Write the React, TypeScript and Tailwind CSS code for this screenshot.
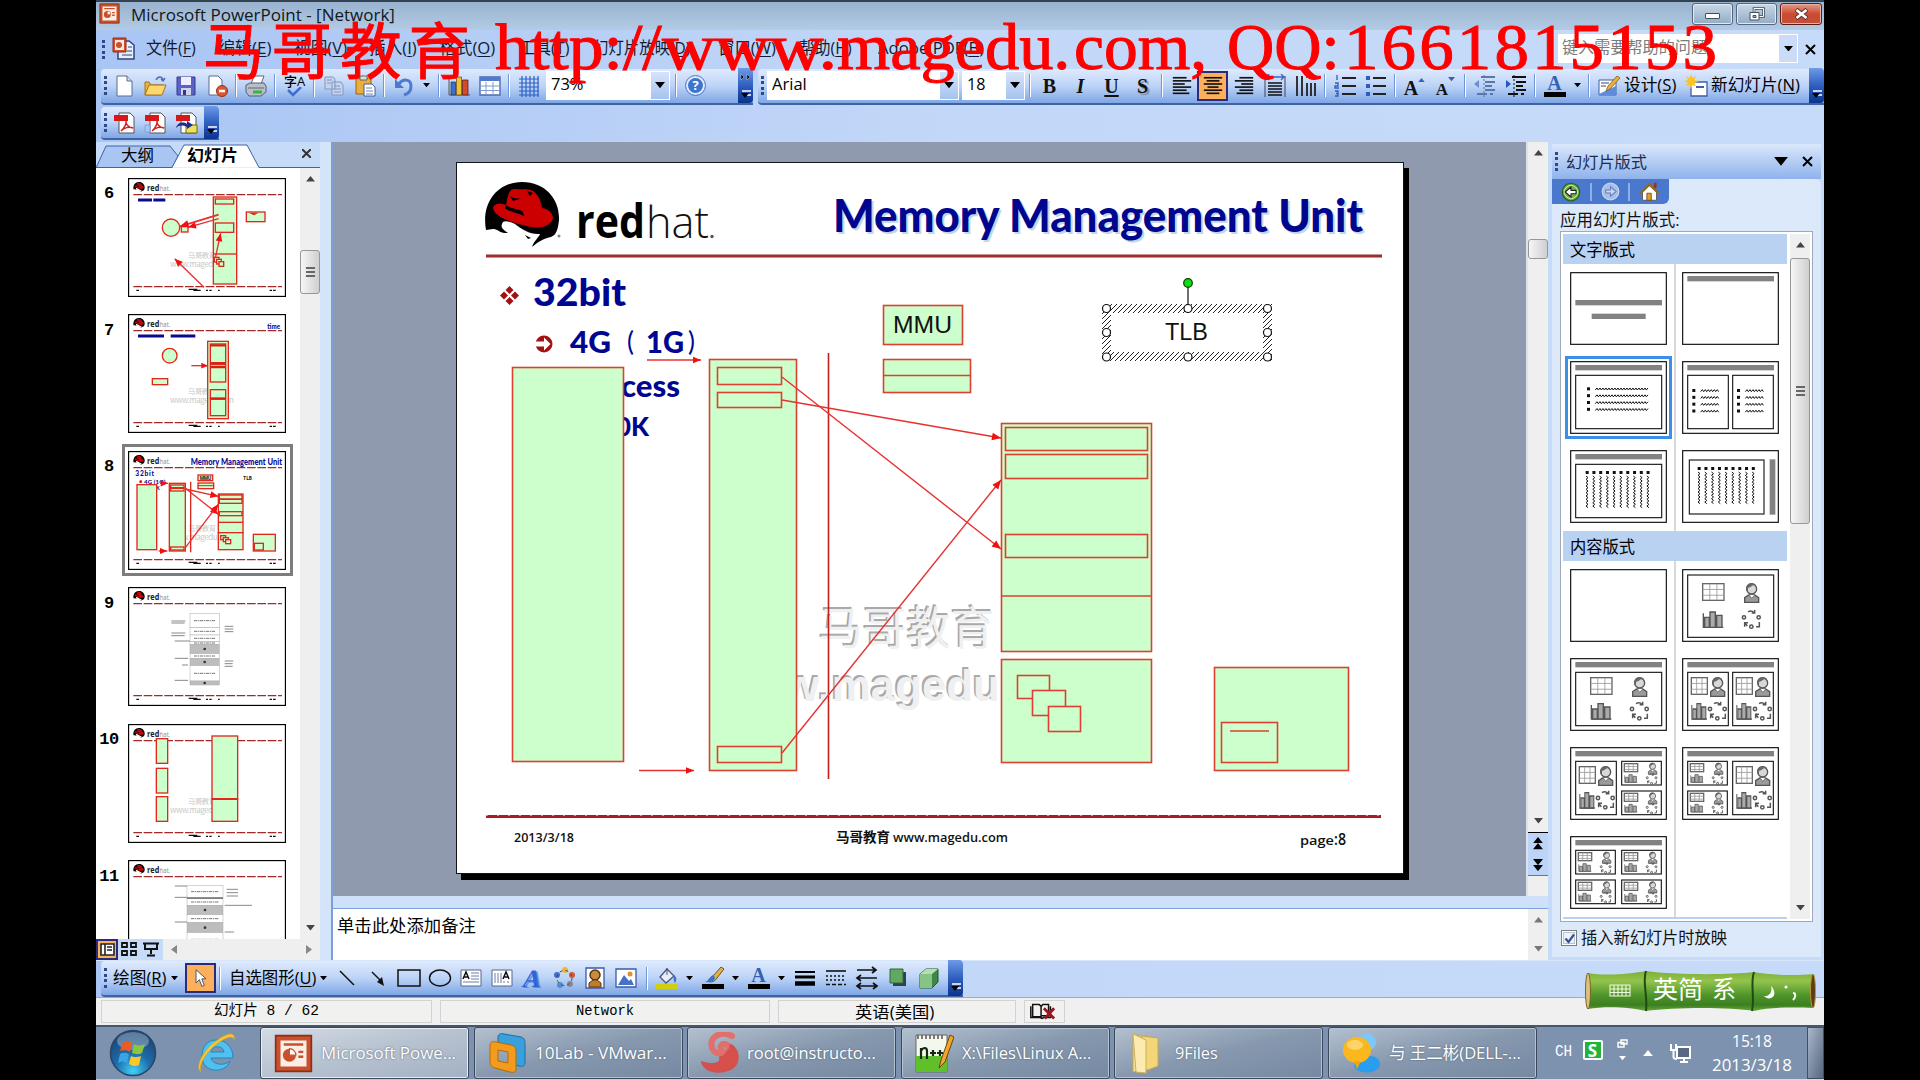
import React, { useLayoutEffect, useRef, useState } from "react";

/* Text squeezed or stretched horizontally to a given width. */
function Fit({ w, className = "", children }: { w: number; className?: string; children: React.ReactNode }) {
  const ref = useRef<HTMLSpanElement>(null);
  const [s, setS] = useState(1);
  useLayoutEffect(() => {
    if (ref.current && ref.current.offsetWidth > 0) setS(w / ref.current.offsetWidth);
  }, [w]);
  return (
    <span className={`inline-block shrink-0 whitespace-nowrap ${className}`} style={{ width: w }}>
      <span ref={ref} className="inline-block origin-left" style={{ transform: `scaleX(${s})` }}>
        {children}
      </span>
    </span>
  );
}

const U = ({ children }: { children: string }) => <span className="underline underline-offset-2">{children}</span>;

function Ic({ children, w = 24, vb = "0 0 24 24", h }: { children: React.ReactNode; w?: number; h?: number; vb?: string }) {
  return (
    <svg width={w} height={h ?? w} viewBox={vb} fill="none" className="block shrink-0">
      {children}
    </svg>
  );
}
const Cell = ({ children, on }: { children: React.ReactNode; on?: boolean }) => (
  <div className={on ? "flex h-[30px] w-[31px] shrink-0 items-center justify-center border-2 border-[#2b2b7c] bg-[#fdb05c]" : "flex h-[30px] w-[31px] shrink-0 items-center justify-center"}>
    {children}
  </div>
);
const Sep = () => (
  <div className="flex w-2 shrink-0 justify-center">
    <div className="h-[23px] w-[2px] border-r border-white bg-[#7197d8]" />
  </div>
);
const Tri = ({ up, c = "#000", w = 8 }: { up?: boolean; c?: string; w?: number }) => (
  <Ic w={w} h={w * 0.62} vb="0 0 8 5">
    <path d={up ? "M0 5L4 0L8 5Z" : "M0 0L4 5L8 0Z"} fill={c} />
  </Ic>
);
const Dd = () => (
  <div className="flex w-[15px] shrink-0 justify-center">
    <Tri w={7} />
  </div>
);
const Handle = () => (
  <div className="flex h-5 w-[9px] shrink-0 flex-col items-center justify-between">
    {[0, 1, 2, 3].map((i) => (
      <div key={i} className="h-[3px] w-[3px] bg-[#2a4a8c]" />
    ))}
  </div>
);
const Cap = ({ chevrons }: { chevrons?: boolean }) => (
  <div className="flex h-full w-[15px] shrink-0 flex-col items-center justify-end rounded-r-[4px] bg-linear-to-b from-[#6f9ae6] via-[#2f5fc0] to-[#0a348e] pb-1">
    {chevrons && (
      <Ic w={12} h={16} vb="0 0 12 16">
        <path d="M1 0L4 3L1 6ZM7 0L10 3L7 6Z" fill="#000" stroke="#fff" strokeWidth=".4" />
      </Ic>
    )}
    <Ic w={10} h={9} vb="0 0 10 9">
      <path d="M1 1H10M3 5L10 5" stroke="#fff" strokeWidth="1.5" />
      <path d="M0 3H8L4 8Z" fill="#000" />
    </Ic>
  </div>
);
const Lines = ({ rows }: { rows: [number, number][] }) => (
  <Ic w={22}>
    {rows.map(([a, b], i) => (
      <path key={i} d={`M${a} ${3 + i * 3.4}H${b}`} stroke="#111" strokeWidth="1.8" />
    ))}
  </Ic>
);

const NewDoc = () => (<Ic><path d="M5 2H15L20 7V22H5Z" fill="#fff" stroke="#5a6c8c" /><path d="M15 2V7H20" fill="#cdd9ee" stroke="#5a6c8c" /></Ic>);
const OpenI = () => (<Ic><path d="M2 8V21H18L20 11H8L6 8Z" fill="#e8b33c" stroke="#a77516" /><path d="M2 21L6 11H23L19 21Z" fill="#fbd772" stroke="#a77516" /><path d="M13 6C15 2 19 2 20 6M18 5L20 7L22 4" stroke="#4b6ea8" strokeWidth="1.4" /></Ic>);
const SaveI = () => (<Ic><path d="M3 3H21V21H3Z" fill="#5b62c4" stroke="#343a8e" /><path d="M7 3H17V11H7Z" fill="#eef" /><path d="M7 14H17V21H7Z" fill="#cfd3ea" /><path d="M9 16H12V21H9Z" fill="#33388c" /></Ic>);
const PermI = () => (<Ic><path d="M4 2H13L17 6V21H4Z" fill="#fff" stroke="#5a6c8c" /><circle cx="17" cy="17" r="5.500" fill="#dc5a32" stroke="#a02c10" /><path d="M14 17H20" stroke="#fff" strokeWidth="2.5" /></Ic>);
const PrintI = () => (<Ic><path d="M7 10L10 2H20L17 10Z" fill="#fff" stroke="#667" /><path d="M2 11L6 9H20L22 12V18L17 22H5L2 18Z" fill="#b9bfca" stroke="#555f70" /><path d="M4 14H20" stroke="#666" /><path d="M9 18H18" stroke="#35b83a" strokeWidth="3" /></Ic>);
const CopyI = () => (<Ic><path d="M3 3H11L13 5V15H3Z M10 8H19L21 11V21H10Z" fill="#c5d5ee" stroke="#8398c0" /><path d="M12 12H18M12 15H19M12 18H19M5 6H10M5 9H9" stroke="#8398c0" /></Ic>);
const PasteI = () => (<Ic><path d="M3 4H18V20H3Z" fill="#e9ae3c" stroke="#96650f" /><path d="M7 2H14V6H7Z" fill="#ddd" stroke="#666" /><path d="M11 10H19L22 13V22H11Z" fill="#fff" stroke="#4a5f92" /><path d="M13 14H19M13 17H20M13 20H20" stroke="#6c83b7" /></Ic>);
const UndoI = () => (<Ic><path d="M7 10C11 4 19 5 19 12C19 17 16 20 12 21" stroke="#4d79cf" strokeWidth="3" /><path d="M3 5V14H12Z" fill="#4d79cf" /></Ic>);
const ChartI = () => (<Ic><path d="M2 3V21H23" stroke="#555" /><path d="M4 8H8.500V21H4Z" fill="#3f6fc8" stroke="#234" strokeWidth=".7" /><path d="M9.500 3H14.500V21H9.500Z" fill="#f2c22c" stroke="#641" strokeWidth=".7" /><path d="M15.500 6H21V21H15.500Z" fill="#d94a26" stroke="#511" strokeWidth=".7" /></Ic>);
const TableI = () => (<Ic><path d="M2 3H22V21H2Z" fill="#fff" stroke="#4b6bb0" strokeWidth="1.4" /><path d="M2 3H22V7H2Z" fill="#4f7ad0" /><path d="M2 12H22M2 16.500H22M8 8V21M15 8V21" stroke="#7e9bd4" /></Ic>);
const GridI = () => (<Ic><path d="M2 5H22M2 9H22M2 13H22M2 17H22M2 21H22M5 2V23M9 2V23M13 2V23M17 2V23M21 2V23" stroke="#2f62c4" strokeWidth="1.2" /></Ic>);
const HelpI = () => (
  <div className="flex h-[19px] w-[19px] items-center justify-center rounded-full border-2 border-[#dfeafc] bg-[#3d74d0] font-['Open_Sans'] text-[13px] leading-none font-bold text-white outline outline-[#4d78c0]">?</div>
);
const DesignI = () => (<Ic><path d="M2 6H19V21H2Z" fill="#fff" stroke="#3e5fa5" /><path d="M2 20L19 12V21H2Z" fill="#5c8be0" /><path d="M9 17L11 12L20 2L23 4L13 15Z" fill="#e9b13a" stroke="#734f12" strokeWidth=".7" /><path d="M4 9H12M4 12H9" stroke="#446" /></Ic>);
const NewSlideI = () => (<Ic><path d="M7 8H23V22H7Z" fill="#fff" stroke="#3e5fa5" strokeWidth="1.3" /><path d="M12 13H20" stroke="#3e5fa5" strokeWidth="2" /><path d="M7 0L8.500 4L12 2L10.500 6L15 7L10.500 9L12 12L8.500 11L7 15L5.500 11L1 12L4 9L0 7L4 6L2 2L5.500 4Z" fill="#f8c42e" /></Ic>);
const PdfI = ({ v = 0 }: { v?: number }) => (
  <Ic>
    <path d="M6 2H17L21 6V22H6Z" fill="#fff" stroke="#555" />
    <path d="M1 4H15V10H1Z" fill="#d81818" />
    {v < 2 && <path d="M8 20C12 17 14 11 13 9C12 13 16 17 20 17C16 15 11 17 8 20Z" stroke="#d42020" strokeWidth="1.5" />}
    {v === 1 && <path d="M1 14H6V21H1Z" fill="#a8c6f4" stroke="#7fa6e0" />}
    {v === 2 && (<><path d="M11 14H22V22H11Z" fill="#ece060" stroke="#776a10" /><path d="M1 17C2 12 8 10 12 13V10L18 14L12 18V16C8 14 4 14 1 17Z" fill="#1c2c90" /></>)}
  </Ic>
);
const PptI = ({ s = 22 }: { s?: number }) => (
  <Ic w={s}>
    <path d="M1 1H23V23H1Z" fill="#c8502c" stroke="#8e2c14" />
    <path d="M4 4H20V20H4Z" fill="#fbeee6" />
    <circle cx="9.500" cy="13" r="4" fill="#c8502c" />
    <path d="M9.500 13V9A4 4 0 0 1 13.500 13Z" fill="#fff" stroke="#c8502c" strokeWidth=".7" />
    <path d="M6 6.500H18M15 11H18M15 14H18" stroke="#c8502c" strokeWidth="1.5" />
  </Ic>
);
const Letter = ({ children, cls = "" }: { children: string; cls?: string }) => (
  <span className={`font-['Liberation_Serif'] text-[20px] leading-none font-bold text-[#111] ${cls}`}>{children}</span>
);
const ColorA = () => (
  <div className="flex flex-col items-center">
    <span className="font-['Liberation_Serif'] text-[20px] leading-[17px] font-bold text-[#345fb4]">A</span>
    <div className="h-[5px] w-[22px] bg-black" />
  </div>
);

function TitleBar() {
  return (
    <div className="flex h-[30px] shrink-0 items-start border-t-2 border-[#33424f] bg-linear-to-b from-[#98b2cf] to-[#b3cbe5] pl-[3px]">
      <div className="mt-px"><PptI s={21} /></div>
      <Fit w={264} className="ml-[11px] font-['Open_Sans'] text-[17px] leading-[25px] text-[#101820]">Microsoft PowerPoint - [Network]</Fit>
      <div className="mt-px mr-[2px] ml-auto flex gap-[3px]">
        <div className="flex h-[22px] w-[41px] items-center justify-center rounded-[3px] border border-[#55677c] bg-linear-to-b from-[#c8d8e8] to-[#93acc6] shadow-[inset_0_0_0_1px_#dfe9f3]"><div className="mt-1 h-[6px] w-[15px] rounded-[1px] border border-[#444f5c] bg-white" /></div>
        <div className="flex h-[22px] w-[41px] items-center justify-center rounded-[3px] border border-[#55677c] bg-linear-to-b from-[#c8d8e8] to-[#93acc6] shadow-[inset_0_0_0_1px_#dfe9f3]">
          <Ic w={17} h={15} vb="0 0 17 15"><path d="M6 1.500H15.500V9.500H6Z" stroke="#444f5c" strokeWidth="2.600" /><path d="M6 1.500H15.500V9.500H6Z" stroke="#fff" /><path d="M2 5.500H11V13H2Z" fill="#fff" stroke="#444f5c" /><path d="M5 8.500H8V10.500H5Z" fill="#9bb" stroke="#444f5c" /></Ic>
        </div>
        <div className="flex h-[22px] w-[42px] items-center justify-center rounded-[3px] border border-[#5c1c14] bg-linear-to-b from-[#e09a88] via-[#cc4a30] to-[#c2513a] shadow-[inset_0_0_0_1px_#eab2a4]">
          <Ic w={15} h={12} vb="0 0 15 12"><path d="M2 1.500L13 10.500M13 1.500L2 10.500" stroke="#59312c" strokeWidth="4.500" /><path d="M2.500 2L12.500 10M12.500 2L2.500 10" stroke="#fff" strokeWidth="2.800" /></Ic>
        </div>
      </div>
    </div>
  );
}

const menus: [string, string, number, number][] = [
  ["文件", "F", 50, 22], ["编辑", "E", 53, 23], ["视图", "V", 53, 22], ["插入", "I", 48, 22], ["格式", "O", 56, 24],
  ["工具", "T", 50, 24], ["幻灯片放映", "D", 97, 28], ["窗口", "W", 58, 23], ["帮助", "H", 53, 26], ["Adobe PDF", "B", 106, 0],
];

function MenuBar() {
  return (
    <div className="flex h-10 shrink-0 items-center pb-px pl-[3px]">
      <Handle />
      <div className="mb-[2px] ml-[4px] w-[24px]">
        <Ic><path d="M6 4H17L22 8V22H6Z" fill="#e8eefa" stroke="#2d4580" strokeWidth="1.500" /><path d="M16 10H20M15 14H20M10 18H20" stroke="#2d4580" /><path d="M1 1H14V15H1Z" fill="#d2512c" stroke="#8e2c14" /><path d="M3 3H12V13H3Z" fill="#fbe9e0" /><circle cx="7" cy="8" r="3" fill="#c8502c" /></Ic>
      </div>
      <div className="mb-[3px] ml-[10px] flex text-[17px] leading-[22px] text-[#111c33]">
        {menus.map(([t, k, w, gap]) => (
          <div key={k} className="flex">
            <Fit w={w}>{t}(<U>{k}</U>)</Fit>
            <div style={{ width: gap }} />
          </div>
        ))}
      </div>
      <div className="mr-[7px] mb-[2px] ml-auto flex h-[29px] w-[240px] items-center justify-between bg-white p-px pl-1">
        <Fit w={145} className="mb-1 text-[16px] leading-[20px] text-[#7c7c7c]">键入需要帮助的问题</Fit>
        <div className="flex h-full w-[18px] items-center justify-center bg-[#cbdcf8]"><Tri w={9} /></div>
      </div>
      <div className="mr-[8px]"><Ic w={11} vb="0 0 11 11"><path d="M1 1L10 10M10 1L1 10" stroke="#000" strokeWidth="2" /></Ic></div>
    </div>
  );
}

const tb = "flex items-center rounded-l-[4px] bg-linear-to-b from-[#dfeafc] via-[#bcd3f7] to-[#7fa6e6] border-b-2 border-[#40639f]";
const Combo = ({ children, cls }: { children: React.ReactNode; cls: string }) => (
  <div className={`flex h-[29px] shrink-0 items-center justify-between bg-white p-px pl-[5px] ${cls}`}>
    {children}
    <div className="flex h-full w-[18px] items-center justify-center bg-linear-to-b from-[#d6e4fb] to-[#a5c3f0]"><Tri w={10} /></div>
  </div>
);

function Toolbars() {
  return (
    <>
      <div className="-mt-px flex h-[36px] shrink-0 gap-[5px] pl-[5px]">
        <div className={`${tb} w-[652px] pb-px`}>
          <div className="w-[7px]"><Handle /></div>
          <Cell><NewDoc /></Cell><Cell><OpenI /></Cell><Cell><SaveI /></Cell><Cell><PermI /></Cell><Sep />
          <Cell><PrintI /></Cell><Sep />
          <Cell>
            <div className="flex flex-col items-center">
              <span className="text-[13px] leading-[12px] font-medium">字A</span>
              <Ic w={18} h={10} vb="0 0 18 10"><path d="M3 3L8 8L16 0" stroke="#3d6fd0" strokeWidth="2.500" /></Ic>
            </div>
          </Cell>
          <Sep /><Cell><CopyI /></Cell><Cell><PasteI /></Cell><Sep /><Cell><UndoI /></Cell><Dd /><div className="w-px" /><Sep />
          <Cell><ChartI /></Cell><Cell><TableI /></Cell><Sep /><Cell><GridI /></Cell>
          <Combo cls="w-[124px] ml-[2px] mr-[2px]"><Fit w={33} className="pb-1 font-['Open_Sans'] text-[17px]">73%</Fit></Combo>
          <Sep /><Cell><HelpI /></Cell>
          <div className="ml-auto h-[35px]"><Cap chevrons /></div>
        </div>
        <div className={`${tb} flex-1 pb-px`}>
          <Handle />
          <Combo cls="w-[192px]"><Fit w={35} className="pb-1 font-['Open_Sans'] text-[17px]">Arial</Fit></Combo>
          <Combo cls="ml-[3px] mr-px w-[63px]"><Fit w={18} className="pb-1 font-['Open_Sans'] text-[17px]">18</Fit></Combo>
          <Sep />
          <Cell><Letter>B</Letter></Cell><Cell><Letter cls="italic">I</Letter></Cell><Cell><Letter cls="underline underline-offset-2">U</Letter></Cell>
          <Cell><Letter cls="[text-shadow:2px_2px_1px_#7d8ba5]">S</Letter></Cell><Sep />
          <Cell><Lines rows={[[2, 17], [2, 22], [2, 15], [2, 22], [2, 17], [2, 20]]} /></Cell>
          <Cell on><Lines rows={[[2, 22], [5, 19], [2, 22], [6, 18], [2, 22], [5, 19]]} /></Cell>
          <Cell><Lines rows={[[7, 22], [2, 22], [9, 22], [2, 22], [7, 22], [4, 22]]} /></Cell>
          <Cell><Ic><path d="M3 3H21M6 0L3 3L6 6M18 0L21 3L18 6" stroke="#3a68c4" strokeWidth="1.400" /><path d="M2 2V23M22 2V23" stroke="#445" /><path d="M5 9H19M5 12H19M5 15H19M5 18H19M5 21H19" stroke="#111" strokeWidth="1.700" /></Ic></Cell>
          <Cell><Ic><path d="M3 2V22M8 2V22M13 9V22M17 9V22M21 9V22" stroke="#222" strokeWidth="1.800" /><path d="M12 3H22" stroke="#3a68c4" strokeWidth="2" /></Ic></Cell>
          <Sep />
          <Cell><Ic><path d="M9 4H23M9 12H23M9 20H23" stroke="#222" strokeWidth="1.800" /><path d="M4 1V6M2 9H5V12H2V14H6M2 17H5V22H2M3 19.500H5" stroke="#2f5dbb" strokeWidth="1.300" /></Ic></Cell>
          <Cell><Ic><path d="M9 4H22M9 12H22M9 20H22" stroke="#222" strokeWidth="1.800" /><path d="M2 2H6V6H2ZM2 10H6V14H2ZM2 18H6V22H2Z" fill="#2f5dbb" /></Ic></Cell>
          <Sep />
          <Cell><div className="flex items-start pt-1"><Letter>A</Letter><Tri up c="#3a62ae" w={7} /></div></Cell>
          <Cell><div className="flex items-start pt-1"><Letter cls="!text-[17px] pt-1">A</Letter><Tri c="#3a62ae" w={7} /></div></Cell>
          <Sep />
          <Cell><Ic><path d="M8 3H22M12 8H22M12 12H19M12 16H22M4 20H14M17 20H20" stroke="#5a77ad" strokeWidth="2" /><path d="M1 10L6 6V14Z" fill="#6d8fd0" /><path d="M11 1V23" stroke="#5a77ad" strokeDasharray="2 2" /></Ic></Cell>
          <Cell><Ic><path d="M8 3H22M12 8H22M12 12H19M12 16H22M4 20H14M17 20H20" stroke="#111" strokeWidth="2" /><path d="M7 10L2 6V14Z" fill="#2459c4" /><path d="M10 1V23" stroke="#111" strokeDasharray="2 2" /></Ic></Cell>
          <Sep /><Cell><ColorA /></Cell><Dd /><Sep />
          <Cell><DesignI /></Cell><Fit w={52} className="pb-px text-[17px]">设计(<U>S</U>)</Fit>
          <div className="ml-[4px]"><Cell><NewSlideI /></Cell></div><Fit w={89} className="pb-px text-[17px]">新幻灯片(<U>N</U>)</Fit>
          <div className="ml-auto h-[35px]"><Cap /></div>
        </div>
      </div>
      <div className="flex h-[37px] shrink-0 pt-[2px] pb-[2px] pl-[5px]">
        <div className={`${tb} w-[118px]`}>
          <div className="w-[8px]"><Handle /></div>
          <Cell><PdfI /></Cell><Cell><PdfI v={1} /></Cell><Cell><PdfI v={2} /></Cell>
          <div className="ml-auto h-[33px]"><Cap /></div>
        </div>
      </div>
    </>
  );
}

/* ---- thumbnails ---- */
const G = "#ccffcc";
const R = "#e0281c";
function Hat({ x, y, k }: { x: number; y: number; k: number }) {
  return (
    <g transform={`translate(${x} ${y}) scale(${k})`}>
      <path d="M1 48C-4 20 13 0 37 0C61 0 75 18 74 38C73 48 71 53 66 55C60 56 54 59 47 65C49 59 54 55 55 52C46 53 36 47 30 42C26 40 18 37 17 42C15 46 20 49 23 51C15 52 12 46 8 47Z" fill="#000" />
      <path d="M8 26C10 20 16 21 21 23C23 14 24 6 30 7C37 8 42 6 48 9C55 14 56 21 57 26C64 27 68 32 68 36C65 46 53 47 42 44C29 41 10 36 8 26Z" fill="#cc0000" />
      <path d="M21 23C25 27 34 26 38 30L39 34C33 31 24 30 20 26ZM25 14C29 17 32 17 37 16L28 19ZM42 9L48 11L45 14Z" fill="#000" />
      <path d="M40 53L46 56L43 57Z" fill="#000" />
    </g>
  );
}
const serifBox = (x: number, y: number, w: number, h: number, key?: number) => (
  <rect key={key} x={x} y={y} width={w} height={h} fill={G} stroke={R} strokeWidth="4" />
);
function Head({ x2, y, size, a }: { x2: number; y: number; size: number; a: number }) {
  return <path d={`M0 0L${-size} ${-size * 0.42}V${size * 0.42}Z`} transform={`translate(${x2} ${y}) rotate(${a})`} fill="#f01010" />;
}
function Arrow({ x1, y1, x2, y2, s, w = 1, c = "#e83030" }: { x1: number; y1: number; x2: number; y2: number; s: number; w?: number; c?: string }) {
  const a = (Math.atan2(y2 - y1, x2 - x1) * 180) / Math.PI;
  return (
    <g>
      <path d={`M${x1} ${y1}L${x2} ${y2}`} stroke={c} strokeWidth={w} />
      <Head x2={x2} y={y2} size={s} a={a} />
    </g>
  );
}
function ThumbBase({ mark, children }: { mark?: boolean; children: React.ReactNode }) {
  return (
    <svg width="158" height="119" viewBox="0 0 474 357" className="block" fill="none">
      <rect x="1.500" y="1.500" width="471" height="354" fill="#fff" stroke="#000" strokeWidth="4" />
      <Hat x={16} y={12} k={0.46} />
      <text x="57" y="40" fontFamily="Open Sans" fontSize="24" fontWeight="700" fill="#222" textLength="37" lengthAdjust="spacingAndGlyphs">red</text>
      <text x="95" y="40" fontFamily="Open Sans" fontSize="24" fontWeight="400" fill="#888" textLength="32" lengthAdjust="spacingAndGlyphs">hat.</text>
      <path d="M16 50H462M16 326H462" stroke="#a42a2a" strokeWidth="4" strokeDasharray="26 5" />
      <path d="M25 337h8M182 334h26M196 337h22M234 337h6M244 337h7M270 337h5M425 337h7M435 337h8" stroke="#111" strokeWidth="4" />
      {mark && (
        <g fill="#c9c9c9" fontFamily="Noto Sans CJK SC">
          <text x="180" y="240" fontSize="22" textLength="84">马哥教育</text>
          <text x="126" y="268" fontSize="24" textLength="192">www.magedu.com</text>
        </g>
      )}
      {children}
    </svg>
  );
}
const Memory = ({ rows, x, w }: { rows: [number, number, boolean][]; x: number; w: number }) => (
  <>
    {rows.map(([y, h, dark], i) => (
      <g key={i}>
        <rect x={x} y={y} width={w} height={h} fill={dark ? "#bdbdbd" : "#fff"} stroke="#aaa" strokeWidth="1.500" />
        {dark ? <circle cx={x + w / 2} cy={y + h / 2} r="4" fill="#333" /> : <path d={`M${x + 12} ${y + h / 2}H${x + w - 12}`} stroke="#777" strokeWidth="3" strokeDasharray="9 2 5 2" />}
      </g>
    ))}
  </>
);
const thumbs: { n: number; el: React.ReactNode }[] = [
  { n: 6, el: (
    <ThumbBase mark>
      <path d="M30 66H72M76 66H112" stroke="#0a0a90" strokeWidth="9" />
      <circle cx="129" cy="149" r="26" fill={G} stroke={R} strokeWidth="4" />
      {serifBox(256, 57, 70, 261)}{serifBox(262, 63, 55, 15)}{serifBox(262, 135, 55, 28)}
      <path d="M256 228H326" stroke={R} strokeWidth="4" />
      {serifBox(355, 102, 56, 29)}<path d="M362 104H392L378 112Z" fill={R} />
      {serifBox(160, 146, 20, 16)}{serifBox(259, 238, 14, 14)}{serifBox(266, 244, 14, 14)}{serifBox(273, 251, 14, 14)}
      <Arrow x1={272} y1={110} x2={156} y2={145} s={26} w={5} /><Arrow x1={272} y1={122} x2={180} y2={148} s={24} w={4} />
      <Arrow x1={262} y1={240} x2={278} y2={166} s={24} w={4} /><Arrow x1={228} y1={328} x2={140} y2={242} s={24} w={4} />
    </ThumbBase>) },
  { n: 7, el: (
    <ThumbBase mark>
      <text x="418" y="44" fontFamily="Lato" fontWeight="900" fontSize="24" fill="#0a0a90" textLength="38" lengthAdjust="spacingAndGlyphs">time</text>
      <path d="M30 66H108M128 66H202" stroke="#0a0a90" strokeWidth="9" />
      <circle cx="125" cy="125" r="22" fill={G} stroke={R} strokeWidth="4" />
      {serifBox(73, 194, 46, 18)}{serifBox(239, 82, 62, 232)}
      {serifBox(247, 90, 46, 56)}{serifBox(247, 150, 46, 54)}{serifBox(247, 227, 46, 26)}{serifBox(247, 255, 46, 50)}
      <path d="M247 94H293M247 149H293M247 159H293M247 254H293" stroke="#d8200f" strokeWidth="7" />
      <Arrow x1={190} y1={155} x2={240} y2={155} s={20} w={4} />
    </ThumbBase>) },
  { n: 8, el: (
    <ThumbBase mark>
      <text x="188" y="42" fontFamily="Lato" fontWeight="900" fontSize="27" fill="#0a0a90" textLength="274" lengthAdjust="spacingAndGlyphs">Memory Management Unit</text>
      <text x="22" y="74" fontFamily="Lato" fontWeight="900" fontSize="20" fill="#0a0a90" textLength="56">32bit</text>
      <text x="48" y="98" fontFamily="Lato" fontWeight="900" fontSize="18" fill="#0a0a90" textLength="64">4G (1G)</text>
      <circle cx="38" cy="92" r="4" fill="#c00" />
      <text x="84" y="118" fontFamily="Lato" fontWeight="900" fontSize="16" fill="#0a0a90">K</text>
      {serifBox(27, 101, 59, 195)}{serifBox(124, 97, 48, 203)}{serifBox(128, 102, 40, 8)}{serifBox(128, 112, 40, 8)}{serifBox(128, 288, 40, 9)}
      <path d="M188 92V304" stroke={R} strokeWidth="4" />
      {serifBox(210, 72, 44, 17)}{serifBox(210, 96, 47, 17)}<path d="M210 104H257" stroke={R} strokeWidth="3" />
      <text x="215" y="87" fontFamily="Open Sans" fontWeight="700" fontSize="14" fill="#111" textLength="35">MMU</text>
      <text x="346" y="87" fontFamily="Open Sans" fontWeight="700" fontSize="14" fill="#111" textLength="26">TLB</text>
      {serifBox(271, 129, 74, 116)}{serifBox(274, 132, 68, 12)}{serifBox(274, 145, 68, 12)}{serifBox(274, 182, 68, 12)}
      <path d="M271 214H345" stroke={R} strokeWidth="4" />
      {serifBox(271, 245, 74, 51)}{serifBox(278, 254, 15, 12)}{serifBox(286, 260, 15, 12)}{serifBox(293, 266, 15, 12)}
      {serifBox(376, 250, 66, 50)}{serifBox(379, 277, 27, 20)}
      <Arrow x1={96} y1={97} x2={120} y2={97} s={22} w={4} /><Arrow x1={92} y1={300} x2={118} y2={300} s={22} w={4} />
      <Arrow x1={172} y1={114} x2={271} y2={136} s={24} w={4} /><Arrow x1={172} y1={112} x2={271} y2={190} s={24} w={4} /><Arrow x1={172} y1={290} x2={271} y2={160} s={24} w={4} />
    </ThumbBase>) },
  { n: 9, el: (
    <ThumbBase>
      <Memory x={186} w={88} rows={[[80, 42, false], [122, 22, false], [144, 20, false], [164, 8, false], [172, 28, true], [200, 14, false], [214, 22, true], [236, 46, false], [282, 12, true]]} />
      <path d="M130 102H172M130 108H170M130 138H172M130 146H170M140 162H186M140 214H180M162 234H180M140 280H180M290 118H316M290 126H316M290 134H316M290 222H316M290 230H314M290 238H314" stroke="#888" strokeWidth="3" />
    </ThumbBase>) },
  { n: 10, el: (
    <ThumbBase mark>
      {serifBox(85, 44, 34, 74)}{serifBox(85, 133, 34, 74)}{serifBox(85, 218, 34, 74)}{serifBox(252, 36, 77, 188)}{serifBox(252, 226, 77, 66)}
    </ThumbBase>) },
  { n: 11, el: (
    <ThumbBase>
      <Memory x={177} w={108} rows={[[76, 38, false], [116, 20, false], [136, 28, true], [164, 24, false], [188, 30, true], [218, 40, false]]} />
      <path d="M140 78H177M140 112H177M140 186H177M296 88H330M296 98H330M296 108H330M290 136H372M290 216H318" stroke="#888" strokeWidth="3" />
      <path d="M177 114H285" stroke="#333" strokeWidth="3" />
    </ThumbBase>) },
];

const VBar = ({ top, thumb, small }: { top: number; thumb: number; small?: boolean }) => (
  <div className="flex h-full w-5 shrink-0 flex-col items-center bg-[#efefef]">
    <div className="mt-[8px]"><Tri up c="#444" w={9} /></div>
    <div style={{ height: top }} />
    <div className="flex w-5 shrink-0 flex-col items-center justify-center gap-[2px] rounded-[3px] border border-[#979797] bg-linear-to-r from-[#f6f6f6] to-[#cfcfd2]" style={{ height: thumb }}>
      {!small && [0, 1, 2].map((i) => <div key={i} className="h-[2px] w-[9px] bg-[#666]" />)}
    </div>
    <div className="mt-auto mb-2"><Tri c="#444" w={9} /></div>
  </div>
);

function LeftPane() {
  return (
    <div className="flex w-[237px] shrink-0 bg-[#d4e5fb]">
      <div className="flex w-[224px] flex-col">
        <div className="relative flex h-[26px] shrink-0 items-center bg-[#c6dbf8]">
          <svg className="absolute inset-0" width="224" height="26" viewBox="0 0 224 26">
            <path d="M0 26L10 4H74L82 14L76 26Z" fill="#a9c6f2" stroke="#3f64a6" />
            <path d="M0 25.500H76L88 3H151L163 25.500H224" fill="#fff" stroke="#3f64a6" />
          </svg>
          <Fit w={33} className="relative ml-[25px] text-[16px] leading-none">大纲</Fit>
          <Fit w={51} className="relative ml-[33px] text-[16px] leading-none font-bold">幻灯片</Fit>
          <div className="relative mb-1 ml-[64px]"><Ic w={9} vb="0 0 9 9"><path d="M0 0L9 9M9 0L0 9" stroke="#333" strokeWidth="2" /></Ic></div>
        </div>
        <div className="flex h-[771px] overflow-hidden bg-white">
          <div className="flex w-[204px] flex-col gap-[4.500px] overflow-hidden pt-[3px]">
            {thumbs.map(({ n, el }) => (
              <div key={n} className="flex h-[132px] shrink-0">
                <div className="w-[26px] pt-[13px] text-center font-['Liberation_Mono'] text-[17px] leading-[20px] font-bold tracking-tight">{n}</div>
                <div className={n === 8 ? "h-[132px] w-[171px] border-[3px] border-[#7d7d7d] px-[3px] py-[3.500px]" : "h-[132px] w-[171px] border-[3px] border-transparent px-[3px] py-[3.500px]"}>{el}</div>
              </div>
            ))}
          </div>
          <VBar top={68} thumb={44} />
        </div>
        <div className="flex h-[21px] items-center bg-[#c6dbf8]">
          <div className="flex h-[21px] w-[22px] items-center justify-center border-2 border-[#2b2b7c] bg-[#fdb05c]"><Ic w={15} h={13} vb="0 0 15 13"><path d="M1 1H14V12H1Z" fill="#fff" /><path d="M1 1H14V12H1ZM5 1V12M7 4H12M7 7H12" stroke="#222" strokeWidth="1.600" /></Ic></div>
          <div className="ml-[3px]"><Ic w={17} h={15} vb="0 0 17 15"><path d="M1 1H6V5H1ZM10 1H15V5H10ZM1 9H6V13H1ZM10 9H15V13H10Z" stroke="#111" strokeWidth="1.800" /></Ic></div>
          <div className="ml-[5px]"><Ic w={16} h={15} vb="0 0 16 15"><path d="M0 1.500H16M2 2V7H14V2M8 8V12M4 13.500H12" stroke="#111" strokeWidth="2" /></Ic></div>
          <div className="ml-[4px] flex h-full flex-1 items-center justify-between bg-[#efefef] px-[8px]">
            <Ic w={6} h={9} vb="0 0 6 9"><path d="M6 0V9L0 4.500Z" fill="#888" /></Ic>
            <Ic w={6} h={9} vb="0 0 6 9"><path d="M0 0V9L6 4.500Z" fill="#888" /></Ic>
          </div>
        </div>
      </div>
      <div className="ml-auto w-[2px] bg-[#7d9fd8]" />
    </div>
  );
}

/* ---- main slide; the drawing uses a coordinate space that starts at (456,162) ---- */
const SR = "#dc4030";
const Bx = ({ x, y, x2, y2 }: { x: number; y: number; x2: number; y2: number }) => (
  <rect x={x + 0.5} y={y + 0.5} width={x2 - x} height={y2 - y} fill={G} stroke={SR} strokeWidth="1.600" />
);
function Slide() {
  const fit = "spacingAndGlyphs";
  const comic = { fontFamily: "Lato, sans-serif", fontWeight: 900, fill: "#00068f" } as const;
  const handles: [number, number][] = [[1105.5, 308.5], [1187, 308.5], [1266.5, 308.5], [1105.5, 332.5], [1266.5, 332.5], [1105.5, 357], [1187, 357], [1266.5, 357]];
  return (
    <svg width="947" height="711" viewBox="456 162 947 711" className="block" fill="none">
      <defs>
        <pattern id="hatch" width="5" height="5" patternUnits="userSpaceOnUse"><path d="M-1 6L6 -1M-1 1L1 -1M4 6L6 4" stroke="#222" strokeWidth="1" /></pattern>
      </defs>
      <Hat x={484} y={182} k={1} />
      <circle cx="558" cy="236" r="1.500" fill="#888" />
      <text x="575" y="238" fontFamily="Open Sans" fontWeight="700" fontSize="46" fill="#000" textLength="69" lengthAdjust={fit}>red</text>
      <text x="645" y="238" fontFamily="Open Sans" fontWeight="300" fontSize="45" fill="#111" textLength="63" lengthAdjust={fit}>hat</text>
      <circle cx="711" cy="236.500" r="1.700" fill="#555" />
      <path d="M485 256H1381" stroke="#a02c2c" strokeWidth="3" />
      <path d="M485 816.500H1380" stroke="#a81c24" strokeWidth="3" />
      <path d="M485 815.500H1380" stroke="#d89090" strokeWidth="1" strokeDasharray="2 9" />
      <g transform="translate(2 2)"><text x="832" y="232" {...comic} fill="#c3d6e6" fontSize="45" textLength="530" lengthAdjust={fit}>Memory Management Unit</text></g>
      <text x="832" y="232" {...comic} fontSize="45" textLength="530" lengthAdjust={fit}>Memory Management Unit</text>
      <path d="M508.500 286L512.500 290L508.500 294L504.500 290ZM508.500 297L512.500 301L508.500 305L504.500 301ZM503 291.500L507 295.500L503 299.500L499 295.500ZM514 291.500L518 295.500L514 299.500L510 295.500Z" fill="#a31212" />
      <text x="532" y="306" {...comic} fontSize="38" textLength="93" lengthAdjust={fit}>32bit</text>
      <circle cx="543" cy="344" r="8.500" fill="#a31212" />
      <path d="M533 341.500H543V337.500L549.500 344L543 350.500V346.500H533Z" fill="#fff" />
      <text x="569" y="353" {...comic} fontSize="31" textLength="41" lengthAdjust={fit}>4G</text>
      <text x="626" y="351" {...comic} fontWeight="400" fontSize="26">(</text>
      <text x="645" y="353" {...comic} fontSize="31" textLength="38" lengthAdjust={fit}>1G</text>
      <text x="687" y="351" {...comic} fontWeight="400" fontSize="26">)</text>
      <text x="620" y="397" {...comic} fontSize="31" textLength="59" lengthAdjust={fit}>cess</text>
      <text x="615" y="436" {...comic} fontSize="26" textLength="33" lengthAdjust={fit}>0K</text>
      <g fontFamily="Noto Sans CJK SC, sans-serif">
        {[["#a9a9a9", 0], ["#f0f0f0", 1.8]].map(([c, d]) => (
          <g key={c} fill={c as string} transform={`translate(${d} ${d})`}>
            <text x="816" y="643" fontSize="45" fontWeight="400" textLength="176" lengthAdjust={fit}>马哥教育</text>
            <text x="708" y="699" fontFamily="Liberation Sans" fontSize="45" fontWeight="700" textLength="120" lengthAdjust={fit}>www.</text>
            <text x="829" y="699" fontFamily="Liberation Sans" fontSize="45" fontWeight="700" textLength="168" lengthAdjust={fit}>magedu</text>
          </g>
        ))}
      </g>
      <Bx x={511} y={367} x2={622} y2={761} />
      <Bx x={708} y={359} x2={795} y2={770} /><Bx x={716} y={367} x2={780} y2={384} /><Bx x={716} y={392} x2={780} y2={407} /><Bx x={716} y={746} x2={780} y2={762} />
      <path d="M827.500 353V779" stroke="#c02020" strokeWidth="1.600" />
      <Bx x={882} y={305} x2={961} y2={344} />
      <Bx x={882} y={359} x2={969} y2={392} /><path d="M883 375.500H970" stroke={SR} strokeWidth="1.600" />
      <Bx x={1000} y={423} x2={1150} y2={651} /><Bx x={1004} y={427} x2={1146} y2={450} /><Bx x={1004} y={454} x2={1146} y2={478} /><Bx x={1004} y={534} x2={1146} y2={557} />
      <path d="M1000 596H1150" stroke={SR} strokeWidth="1.600" />
      <Bx x={1000} y={659} x2={1150} y2={762} /><Bx x={1016} y={675} x2={1048} y2={698} /><Bx x={1031} y={690} x2={1064} y2={715} /><Bx x={1047} y={706} x2={1079} y2={731} />
      <Bx x={1213} y={667} x2={1347} y2={770} /><Bx x={1220} y={722} x2={1276} y2={762} /><path d="M1229 731H1268" stroke={SR} strokeWidth="1.500" />
      <Arrow x1={646} y1={360} x2={700} y2={360} s={8} w={1.4} /><Arrow x1={638} y1={770.5} x2={693} y2={770.5} s={8} w={1.4} />
      <Arrow x1={781} y1={377} x2={1000} y2={549} s={9} w={1.4} /><Arrow x1={781} y1={400} x2={1000} y2={438} s={9} w={1.4} /><Arrow x1={781} y1={753} x2={1000} y2={480} s={9} w={1.4} />
      <text x="892" y="333" fontFamily="Liberation Sans" fontSize="24" fill="#111" textLength="59" lengthAdjust={fit}>MMU</text>
      <path d="M1101 304H1271V361H1101ZM1110 313V352H1262V313Z" fill="url(#hatch)" fillRule="evenodd" />
      <text x="1164" y="340" fontFamily="Liberation Sans" fontSize="24" fill="#111" textLength="43" lengthAdjust={fit}>TLB</text>
      <path d="M1187 286V305" stroke="#222" strokeWidth="1.300" />
      {handles.map(([x, y], i) => (<circle key={i} cx={x} cy={y} r="4" fill="#fff" stroke="#111" strokeWidth="1.200" />))}
      <circle cx="1187" cy="283" r="4.300" fill="#0be00b" stroke="#0a3a0a" strokeWidth="1.200" />
      <g fontFamily="Open Sans, Noto Sans CJK SC, sans-serif" fontWeight="600" fill="#111">
        <text x="513" y="842" fontSize="12.500" textLength="60" lengthAdjust={fit}>2013/3/18</text>
        <text x="835" y="842" fontFamily="Noto Sans CJK SC" fontWeight="700" fontSize="13.500" textLength="54">马哥教育</text>
        <text x="892" y="842" fontSize="13" textLength="115" lengthAdjust={fit}>www.magedu.com</text>
        <text x="1299" y="845" fontSize="13" textLength="34" lengthAdjust={fit}>page</text>
        <text x="1333" y="845" fontSize="16" textLength="12" lengthAdjust={fit}>:8</text>
      </g>
    </svg>
  );
}

function Center() {
  return (
    <div className="flex w-[1215px] shrink-0 flex-col">
      <div className="flex h-[754px] shrink-0">
        <div className="flex-1 bg-[#909aae] pt-[20px] pl-[123px]">
          <div className="h-[712px] w-[948px] border border-[#10151c] bg-white shadow-[5px_6px_0_0_#000]">
            <div className="-mt-px"><Slide /></div>
          </div>
        </div>
        <div className="flex w-[22px] flex-col items-center border-l-2 border-[#dde3ec] bg-[#efefef]">
          <div className="h-[690px]"><VBar top={83} thumb={20} small /></div>
          <div className="flex h-[44px] w-full flex-col items-center justify-center gap-[9px] border-t border-b border-t-black border-b-[#5577b5] bg-[#bcd4f8]">
            <div className="flex flex-col"><Tri up w={10} /><Tri up w={10} /></div>
            <div className="flex flex-col"><Tri w={10} /><Tri w={10} /></div>
          </div>
        </div>
      </div>
      <div className="h-[13px] shrink-0 border-b border-[#7ea1dc] bg-[#cfe0f9]" />
      <div className="flex flex-1 bg-white">
        <Fit w={139} className="mt-[5px] ml-[4px] text-[17px] leading-[24px]">单击此处添加备注</Fit>
        <div className="ml-auto flex w-[20px] flex-col items-center justify-between bg-[#efefef] py-[8px]"><Tri up c="#777" w={9} /><Tri c="#777" w={9} /></div>
      </div>
    </div>
  );
}

/* ---- layout gallery, drawn at three units to the pixel ---- */
const Frame = ({ x, y, w, h }: { x: number; y: number; w: number; h: number }) => <rect x={x} y={y} width={w} height={h} fill="#fff" stroke="#1c1c1c" strokeWidth="3.500" />;
function Quad({ x, y, w, h }: { x: number; y: number; w: number; h: number }) {
  const small = h < 100;
  const iw = small ? 40 : w < 150 ? 48 : 64;
  const ih = small ? 26 : 52;
  const padX = small ? 8 : w < 150 ? 11 : 45;
  const xa = x + padX;
  const xb = x + w - padX - (small ? 32 : 44);
  const ya = y + (small ? 7 : h > 175 ? 26 : 16);
  const yb = y + h - ih - (small ? 7 : h > 175 ? 28 : 18);
  const k = small ? 0.6 : 1;
  return (
    <g>
      <Frame x={x} y={y} w={w} h={h} />
      <rect x={xa} y={ya} width={iw} height={ih - 2} fill="#fff" stroke="#666" strokeWidth="4" />
      <path d={`M${xa} ${ya + ih / 3}H${xa + iw}M${xa} ${ya + (ih * 2) / 3}H${xa + iw}M${xa + iw / 3} ${ya}V${ya + ih - 2}M${xa + (iw * 2) / 3} ${ya}V${ya + ih - 2}`} stroke="#999" strokeWidth="2.500" />
      <g transform={`translate(${xb} ${ya - 4}) scale(${k})`}>
        <path d="M2 60V46L14 38H32L44 46V60Z" fill="#9a9a9a" stroke="#555" strokeWidth="4" />
        <circle cx="23" cy="20" r="15" fill="#d8d8d8" stroke="#555" strokeWidth="4" />
        <path d="M7 24C2 4 24 -4 36 8C24 6 20 16 12 16V28Z" fill="#666" /><path d="M16 38L23 48L32 38" fill="#fff" stroke="#555" strokeWidth="2" />
      </g>
      <g transform={`translate(${xa} ${yb}) scale(${iw / 64} ${ih / 52})`}>
        <path d="M2 8V50H62" stroke="#555" strokeWidth="4" />
        <path d="M6 20H20V50H6ZM22 4H38V50H22ZM42 14H58V50H42Z" fill="#aaa" stroke="#555" strokeWidth="4" />
      </g>
      <g transform={`translate(${xb - 6} ${yb - 2}) scale(${k})`} stroke="#555" strokeWidth="4.500">
        <circle cx="6" cy="22" r="5" /><circle cx="50" cy="22" r="5" /><circle cx="28" cy="50" r="5" />
        <path d="M18 6C24 2 30 2 36 8M38 0V9H29M52 36V50H42M8 50V38H18M8 38L16 48" />
      </g>
    </g>
  );
}
const Bar = ({ x = 16, y = 12, w = 260, h = 16 }: { x?: number; y?: number; w?: number; h?: number }) => <rect x={x} y={y} width={w} height={h} fill="#828282" />;
function zig(x: number, y: number, n: number, vertical?: boolean) {
  let d = `M${x} ${y}`;
  for (let i = 0; i < n; i++) d += vertical ? (i % 2 ? "l-6 5" : "l6 5") : i % 2 ? "l4 6" : "l5 -6";
  return d;
}
const Bul = ({ x, y, n, s = 20 }: { x: number; y: number; n: number; s?: number }) => (
  <>
    {[0, 1, 2, 3].map((i) => (
      <g key={i}>
        <rect x={x} y={y + i * 20.5} width="9" height="9" fill="#111" />
        <path d={zig(x + s + 5, y + 8 + i * 20.5, n)} stroke="#111" strokeWidth="3" />
      </g>
    ))}
  </>
);
const VBul = ({ x, y, cols }: { x: number; y: number; cols: number }) => (
  <>
    {Array.from({ length: cols }, (_, i) => (
      <g key={i}>
        <rect x={x + i * 20.3} y={y} width="9" height="9" fill="#111" />
        <path d={zig(x + 1 + i * 20.3, y + 15, 19, true)} stroke="#111" strokeWidth="3" />
      </g>
    ))}
  </>
);
function Lay({ children, on }: { children?: React.ReactNode; on?: boolean }) {
  return (
    <div className={on ? "-m-[5px] h-[83px] w-[107px] border-[3px] border-[#3c8fe8] p-[2px]" : ""}>
      <svg width="97" height="73" viewBox="0 0 291 219" className="block" fill="none">
        <rect x="2" y="2" width="287" height="215" fill="#fff" stroke="#111" strokeWidth="3.500" />
        {children}
      </svg>
    </div>
  );
}
const GalleryHead = ({ children }: { children: string }) => (
  <div className="flex h-[30px] w-[224px] shrink-0 items-center bg-[#b9d2f2] pl-[7px]"><Fit w={65} className="text-[17px] leading-none">{children}</Fit></div>
);
const Pairs = ({ children, h }: { children: React.ReactNode; h: string }) => (
  <div className={`flex shrink-0 ${h}`}>
    <div className="grid w-[224px] auto-rows-[73px] grid-cols-[97px_97px] gap-x-[15px] gap-y-[16px] bg-[linear-gradient(#d8d8d8,#d8d8d8)] bg-[length:2px_100%] bg-[position:111px_0] bg-no-repeat pt-[8px] pl-[7px]">{children}</div>
  </div>
);

function RightPane() {
  return (
    <div className="flex flex-1 flex-col bg-[#c6daf9] pt-[2px] pr-[3px] pl-[4px]">
      <div className="flex h-[35px] shrink-0 items-center bg-linear-to-b from-[#dbe8fb] to-[#8fb2ec]">
        <Handle />
        <Fit w={81} className="ml-[5px] text-[16px] leading-none text-[#1c2c4c]">幻灯片版式</Fit>
        <div className="ml-auto flex items-center gap-[14px] pr-[8px]"><Tri w={14} /><Ic w={11} vb="0 0 11 11"><path d="M1 1L10 10M10 1L1 10" stroke="#000" strokeWidth="2" /></Ic></div>
      </div>
      <div className="flex flex-1 flex-col rounded-tr-md bg-[#dce9fb]">
        <div className="flex h-[25px] w-[117px] items-center justify-between rounded-br-md bg-[#4a78cc] pr-[9px] pl-[9px]">
          <Ic w={20}><circle cx="12" cy="12" r="10.500" fill="#6fb34a" stroke="#2e6418" strokeWidth="1.500" /><circle cx="12" cy="12" r="8" stroke="#d5efc4" /><path d="M5 12L12 6V10H18V14H12V18Z" fill="#fff" stroke="#222" strokeWidth="1.300" /></Ic>
          <div className="h-[18px] w-[2px] bg-[#8fb0ea]" />
          <Ic w={19}><circle cx="12" cy="12" r="10.500" fill="#a9bfe6" stroke="#c5d5f2" strokeWidth="1.500" /><path d="M19 12L12 6V10H6V14H12V18Z" fill="#c9d8f2" stroke="#5f7fba" strokeWidth="1.300" /></Ic>
          <div className="h-[18px] w-[2px] bg-[#8fb0ea]" />
          <Ic w={21}><path d="M17 2H20V8H17Z" fill="#a82a2a" /><path d="M4 12L12 4L20 12V22H4Z" fill="#fff" stroke="#555" /><path d="M1 13L12 2L23 13L21 14.500L12 6L3 14.500Z" fill="#8a6a28" /><path d="M9 14H14V22H9Z" fill="#e0a030" stroke="#704a10" /></Ic>
        </div>
        <Fit w={119} className="mt-[4px] ml-[8px] h-[23px] text-[17px] leading-[24px] text-[#111]">应用幻灯片版式:</Fit>
        <div className="ml-[8px] flex h-[691px] w-[253px] justify-between border border-[#a0a9b8] bg-white p-[2px]">
          <div className="flex flex-col overflow-hidden border-b-2 border-[#b9d2f2]">
            <GalleryHead>文字版式</GalleryHead>
            <Pairs h="h-[267px]">
              <Lay><Bar x={16} y={84} /><Bar x={65} y={125} w={162} /></Lay>
              <Lay><Bar /></Lay>
              <Lay on><Bar /><Frame x={17} y={43} w={258} h={160} /><Bul x={51} y={79} n={35} /></Lay>
              <Lay><Bar /><Frame x={17} y={43} w={122} h={160} /><Frame x={152} y={43} w={122} h={160} /><Bul x={31} y={84} n={12} /><Bul x={165} y={84} n={12} /></Lay>
              <Lay><Bar /><Frame x={17} y={43} w={258} h={160} /><VBul x={47} y={63} cols={10} /></Lay>
              <Lay><Frame x={22} y={30} w={224} h={162} /><Bar x={263} y={28} w={17} h={166} /><VBul x={47} y={51} cols={9} /></Lay>
            </Pairs>
            <GalleryHead>内容版式</GalleryHead>
            <Pairs h="h-[357px]">
              <Lay />
              <Lay><Quad x={17} y={18} w={258} h={187} /></Lay>
              <Lay><Bar /><Quad x={17} y={43} w={258} h={160} /></Lay>
              <Lay><Bar /><Quad x={17} y={43} w={122} h={160} /><Quad x={152} y={43} w={122} h={160} /></Lay>
              <Lay><Bar /><Quad x={17} y={43} w={122} h={160} /><Quad x={155} y={43} w={119} h={71} /><Quad x={155} y={132} w={119} h={71} /></Lay>
              <Lay><Bar /><Quad x={17} y={43} w={119} h={71} /><Quad x={17} y={132} w={119} h={71} /><Quad x={152} y={43} w={122} h={160} /></Lay>
              <Lay><Bar /><Quad x={17} y={43} w={119} h={71} /><Quad x={17} y={132} w={119} h={71} /><Quad x={155} y={43} w={119} h={71} /><Quad x={155} y={132} w={119} h={71} /></Lay>
            </Pairs>
          </div>
          <VBar top={10} thumb={266} />
        </div>
        <div className="mt-[5px] flex items-center pl-[9px]">
          <div className="flex h-4 w-4 items-center justify-center border border-[#7a8088] bg-[#eef1f6] shadow-[inset_0_0_0_1px_#fff,inset_0_0_0_2px_#bcc3cd]"><Ic w={11} vb="0 0 11 11"><path d="M1.500 5.500L4.500 9L10 1.500" stroke="#33529c" strokeWidth="2.200" /></Ic></div>
          <Fit w={146} className="ml-1 text-[17px] leading-[22px] text-[#111]">插入新幻灯片时放映</Fit>
        </div>
      </div>
      <div className="h-[3px] shrink-0" />
    </div>
  );
}

function DrawBar() {
  return (
    <div className="flex h-[37px] shrink-0 border-t border-[#d8e6fb] pl-[5px]">
      <div className={`${tb} w-[862px]`}>
        <div className="w-[12px]"><Handle /></div>
        <Fit w={54} className="text-[17px]">绘图(<U>R</U>)</Fit><Dd /><div className="w-[3px]" />
        <Cell on><Ic w={20} vb="0 0 20 24"><path d="M4 2V18L8 14L11 22L14 21L11 13H16Z" fill="#fff" stroke="#556" strokeWidth="1.200" /></Ic></Cell>
        <Sep /><Fit w={87} className="ml-[5px] text-[17px]">自选图形(<U>U</U>)</Fit><Dd />
        <Cell><Ic><path d="M5 5L19 19" stroke="#111" strokeWidth="1.500" /></Ic></Cell>
        <Cell><Ic><path d="M6 6L14 14" stroke="#111" strokeWidth="1.500" /><path d="M18 20L11 16L16 11Z" fill="#111" /></Ic></Cell>
        <Cell><Ic><path d="M1 4H23V20H1Z" stroke="#111" strokeWidth="1.500" /></Ic></Cell>
        <Cell><Ic><ellipse cx="12" cy="12" rx="10.500" ry="8" stroke="#111" strokeWidth="1.400" /></Ic></Cell>
        <Cell><Ic><path d="M2 4H22V20H2Z" fill="#fff" stroke="#56678c" /><path d="M4 13L7 6L10 13M5 11H9" stroke="#111" strokeWidth="1.500" /><path d="M12 7H20M12 10H20M12 13H20M4 16H20" stroke="#6b7da5" /></Ic></Cell>
        <Cell><Ic><path d="M2 4H22V20H2Z" fill="#fff" stroke="#56678c" /><path d="M13 13L16 6L19 13M14 11H18" stroke="#111" strokeWidth="1.500" /><path d="M5 7V17M8 7V17M11 7V17M14 15V17M18 15V17" stroke="#6b7da5" /></Ic></Cell>
        <Cell><span className="-skew-x-12 font-['Liberation_Serif'] text-[25px] leading-none font-bold text-[#2f66d4] [text-shadow:2px_1px_0_#5d8ce2]">A</span></Cell>
        <Cell><Ic><circle cx="5" cy="9" r="3" fill="#3f6fc8" /><circle cx="13" cy="4" r="3" fill="#efb73a" /><circle cx="20" cy="9" r="3" fill="#d65a30" /><circle cx="18" cy="18" r="3" fill="#888" /><circle cx="8" cy="19" r="3" fill="#4a92cc" /><circle cx="12.500" cy="12" r="7.500" stroke="#446" strokeDasharray="3 3" /></Ic></Cell>
        <Cell><Ic><path d="M3 2H21V22H3Z" fill="#fff" stroke="#3d5aa8" strokeWidth="1.300" /><circle cx="12" cy="9" r="5" fill="#c98b3e" stroke="#5c3510" strokeWidth="1.500" /><path d="M6 21V17L10 14H14L18 17V21Z" fill="#c07c28" stroke="#5c3510" /></Ic></Cell>
        <Cell><Ic><path d="M2 3H22V21H2Z" fill="#fff" stroke="#3d5aa8" strokeWidth="1.300" /><path d="M4 19L10 9L15 15L17 13L20 19Z" fill="#4573c4" /><circle cx="16" cy="8" r="2.500" fill="#e09030" /></Ic></Cell>
        <div className="w-[2px]" /><Sep />
        <Cell><Ic><path d="M5 11L12 3L19 10L11 17Z" fill="#e8edf6" stroke="#44577f" strokeWidth="1.300" /><path d="M12 2V9" stroke="#44577f" /><path d="M18 9C22 10 22 14 20 17C18 14 19 11 18 9Z" fill="#3f6fc8" /><path d="M1 18H23V23H1Z" fill="#cfd010" /></Ic></Cell><Dd />
        <Cell><Ic><path d="M8 16C8 12 10 11 13 9L20 1L23 3L16 12C14 15 12 16 8 16Z" fill="#e9b13a" stroke="#654" /><path d="M3 16C8 16 8 9 13 10C16 13 12 17 3 16Z" fill="#3f72cf" /><path d="M1 18H23V23H1Z" fill="#000" /></Ic></Cell><Dd />
        <Cell><ColorA /></Cell><Dd />
        <Cell><Ic><path d="M2 6H22" stroke="#000" strokeWidth="2" /><path d="M2 11H22" stroke="#000" strokeWidth="3" /><path d="M2 17.500H22" stroke="#000" strokeWidth="4.500" /></Ic></Cell>
        <Cell><Ic><path d="M2 5H22" stroke="#111" strokeWidth="1.600" /><path d="M2 10H22M2 14H22" stroke="#111" strokeWidth="1.600" strokeDasharray="2 2" /><path d="M2 18.500H22" stroke="#111" strokeWidth="1.600" strokeDasharray="4 2" /></Ic></Cell>
        <Cell><Ic><path d="M2 4H20M2 12H22M2 20H22M17 1L21 4L17 7M6 9L2 12L6 15M6 17L2 20L6 23M18 17L22 20L18 23" stroke="#111" strokeWidth="1.700" /></Ic></Cell>
        <Cell><Ic><path d="M7 6H20V20H7Z" fill="#33404a" /><path d="M4 3H17V17H4Z" fill="#61a862" stroke="#2f6b36" /></Ic></Cell>
        <Cell><Ic><path d="M3 8L9 3H21V16L15 22H3Z" fill="#3f8744" stroke="#24572b" /><path d="M3 8H15V22H3Z" fill="#86c486" /><path d="M3 8L9 3H21L15 8Z" fill="#b5dfb2" /></Ic></Cell>
        <div className="ml-auto h-[36px]"><Cap /></div>
      </div>
    </div>
  );
}

function StatusBar() {
  const p = "flex h-[23px] items-center justify-center border border-[#d2d2d2] bg-[#f1f1f0] text-[15px] leading-none";
  return (
    <div className="flex h-[28px] shrink-0 items-center gap-[8px] border-t border-[#a3a9b4] bg-[#f0f0f0] pl-[5px]">
      <div className={`${p} w-[331px]`}><Fit w={105} className="font-['Liberation_Mono','Noto_Sans_CJK_SC',monospace]">幻灯片 8 / 62</Fit></div>
      <div className={`${p} w-[330px]`}><Fit w={58} className="font-['Liberation_Mono',monospace]">Network</Fit></div>
      <div className={`${p} w-[238px] pr-[5px]`}><Fit w={79} className="text-[16px]">英语(美国)</Fit></div>
      <div className={`${p} w-[41px] pr-[6px]`}>
        <Ic w={28} h={19} vb="0 0 30 19"><path d="M3 4V16H13L15 17L17 16H24V4M5 2H12L14 4V15H5ZM14 4L16 2H22V14H14" fill="#fff" stroke="#111" strokeWidth="1.600" /><path d="M17 6L28 17M28 6L18 17" stroke="#9c1420" strokeWidth="3" /></Ic>
      </div>
    </div>
  );
}

const tasks: { t: string; w: number; icon: React.ReactNode; active?: boolean; gap: number }[] = [
  { t: "Microsoft Powe...", w: 135, gap: 8, active: true, icon: <PptI s={39} /> },
  { t: "10Lab - VMwar...", w: 132, gap: 8, icon: <Ic w={39} h={42} vb="0 0 39 42"><path d="M10 5C10 2 13 1 16 2L33 5C37 6 37 9 37 12V30C37 34 35 35 31 34L27 33V17L10 13Z" fill="#3aa0dc" stroke="#1d6ea8" /><path d="M2 14C2 10 4 9 8 10L23 13C27 14 28 16 28 20V36C28 40 26 41 22 40L7 36C3 35 2 33 2 29ZM10 18V29L20 31V20Z" fill="#f29b1c" stroke="#b56a08" fillRule="evenodd" /></Ic> },
  { t: "root@instructo...", w: 129, gap: 7, icon: <Ic w={40} h={42} vb="0 0 40 42"><path d="M31 4C18 -2 8 6 11 16C14 24 27 23 28 16C27 10 18 11 20 17" stroke="#e0706c" strokeWidth="6" strokeLinecap="round" /><path d="M30 14C38 20 38 33 27 37C18 41 6 38 3 32C12 35 22 32 20 26" fill="#d8504c" stroke="#d4504c" strokeWidth="4" strokeLinecap="round" /></Ic> },
  { t: "X:\\Files\\Linux A...", w: 129, gap: 8, icon: <Ic w={39} h={42} vb="0 0 39 42"><path d="M1 3H32V40H1Z" fill="#f4f7ee" stroke="#666" /><path d="M1 24H32V40H1Z" fill="#5fc02c" /><path d="M3 3V7M7 3V7M11 3V7M15 3V7M19 3V7M23 3V7M27 3V7" stroke="#555" strokeWidth="1.500" /><path d="M6 27V16M6 19C8 15 12 15 12 19V27M15 21H21M18 18V24M22 21H28M25 18V24" stroke="#152a10" strokeWidth="2.200" /><path d="M24 36L26 28L35 3L39 5L30 30Z" fill="#f0a52c" stroke="#6c4510" /></Ic> },
  { t: "9Files", w: 43, gap: 8, icon: <Ic w={39} h={42} vb="0 0 39 42"><path d="M5 2L16 5V38L5 40Z" fill="#f7e29a" stroke="#c9a84a" /><path d="M14 4L30 6V34L20 38L14 36Z" fill="#f3d678" stroke="#c9a84a" /><path d="M5 2L18 8V41L8 40Z" fill="#fbebb0" stroke="#d0b056" /></Ic> },
  { t: "与 王二彬(DELL-...", w: 132, gap: 8, icon: <Ic w={39} h={42} vb="0 0 39 42"><circle cx="25" cy="10" r="9" fill="#7fc7f7" /><path d="M12 34C14 22 38 20 38 32C38 43 14 43 12 34Z" fill="#2b9df0" /><ellipse cx="15" cy="18" rx="14" ry="13" fill="#fbb81c" /><path d="M12 29L15 37L19 29Z" fill="#f3a410" /><ellipse cx="13" cy="13" rx="8" ry="5" fill="#ffe08a" opacity=".7" /></Ic> },
];

function Taskbar() {
  return (
    <div className="flex h-[54px] shrink-0 items-center border-t-2 border-[#46566c] bg-[#7d92ae] text-white">
      <div className="ml-[13px]">
        <Ic w={48} vb="0 0 48 48">
          <defs><radialGradient id="orb" cx=".5" cy=".9" r=".9"><stop offset="0" stopColor="#3fd0f4" /><stop offset=".45" stopColor="#1d6ba8" /><stop offset="1" stopColor="#1c3f6c" /></radialGradient></defs>
          <circle cx="24" cy="24" r="22.500" fill="url(#orb)" stroke="#28456a" strokeWidth="1.500" />
          <ellipse cx="24" cy="12" rx="16" ry="9" fill="#fff" opacity=".3" />
          <path d="M14 13C17 11 20 12 23 14L21 23C18 21 15 21 11 22Z" fill="#ee5a24" />
          <path d="M25 15C28 17 32 17 36 15L33 24C30 26 26 25 23 24Z" fill="#8cc63e" />
          <path d="M11 25C14 23 17 24 20 25L18 34C15 32 12 32 9 34Z" fill="#38a4e4" />
          <path d="M22 27C26 29 29 28 32 27L30 36C27 38 23 37 20 35Z" fill="#fdc62a" />
        </Ic>
      </div>
      <div className="ml-[39px]">
        <Ic w={42} h={44} vb="0 0 42 44">
          <path d="M20 9C30 9 37 16 37 27H15C16 33 27 36 34 30C30 43 6 43 6 25C6 15 12 9 20 9ZM15 21H28C27 14 16 14 15 21Z" fill="#4fc0ef" stroke="#2387c4" fillRule="evenodd" />
          <path d="M5 41C-2 36 8 18 20 10C31 2 40 0 38 9C38 4 30 6 22 12C10 21 2 34 5 41Z" fill="#f6c730" stroke="#d8a010" strokeWidth=".6" />
        </Ic>
      </div>
      <div className="ml-[22px] flex gap-[4.500px]">
        {tasks.map((k) => (
          <div key={k.t} className={k.active
            ? "flex h-[52px] w-[209px] items-center rounded-[3px] border border-[#3c495c] bg-linear-to-br from-[#d3dbe4] via-[#b7c2d0] to-[#a3b1c4] pl-[13px] shadow-[inset_0_0_0_1px_#e8edf3]"
            : "flex h-[52px] w-[209px] items-center rounded-[3px] border border-[#3c495c] bg-linear-to-br from-[#b3c0cf] via-[#8798ae] to-[#7589a3] pl-[13px] shadow-[inset_0_0_0_1px_#b4c1d1]"}>
            <div className="flex w-[39px] justify-center">{k.icon}</div>
            <div style={{ width: k.gap }} />
            <Fit w={k.w} className="font-['Open_Sans','Noto_Sans_CJK_SC',sans-serif] text-[17px] [text-shadow:0_0_2px_#4a5a70]">{k.t}</Fit>
          </div>
        ))}
      </div>
      <Fit w={17} className="mb-[3px] ml-[18px] font-['Liberation_Mono'] text-[16px]">CH</Fit>
      <div className="ml-[11px] mb-[6px] flex h-[20px] w-[20px] items-center justify-center rounded-[2px] border-2 border-white bg-[#1fb53a] font-['Open_Sans'] text-[17px] leading-none font-bold">S</div>
      <div className="mb-[6px] ml-[14px] flex flex-col items-center gap-[8px]">
        <Ic w={11} h={9} vb="0 0 11 9"><path d="M4 1H10V5H4ZM1 3.500H7V8H1Z" fill="#7d92ae" stroke="#fff" strokeWidth="1.400" /></Ic>
        <Tri c="#fff" w={7} />
      </div>
      <div className="ml-[15px]"><Tri up c="#fff" w={10} /></div>
      <div className="ml-[16px]"><Ic w={22} h={22} vb="0 0 22 22"><path d="M8 5H21V16H8ZM11 20H19M15 16V20" fill="#566a86" stroke="#fff" strokeWidth="2" /><path d="M2 2V8H7V2M4.500 8V15C4.500 17 6 17 8 17" stroke="#fff" strokeWidth="2" /></Ic></div>
      <div className="ml-[21px] flex flex-col items-center gap-[2px] font-['Open_Sans'] text-[16px] leading-[22px]">
        <Fit w={40}>15:18</Fit>
        <Fit w={80}>2013/3/18</Fit>
      </div>
      <div className="ml-auto h-full w-[17px] border border-[#3f4f66] bg-linear-to-br from-[#a9b7c9] to-[#57687f]" />
    </div>
  );
}

function Bamboo() {
  return (
    <div className="absolute top-[969px] left-[1585px] h-[44px] w-[231px]">
      <svg className="absolute inset-0" width="231" height="44" viewBox="0 0 231 44" fill="none">
        <defs><linearGradient id="bam" x1="0" y1="0" x2="0" y2="1"><stop offset="0" stopColor="#7fae3a" /><stop offset=".25" stopColor="#93c44c" /><stop offset=".6" stopColor="#4f962b" /><stop offset=".85" stopColor="#3c7f22" /><stop offset="1" stopColor="#6aa838" /></linearGradient></defs>
        <path d="M3 4C20 7 45 5 61 2C90 6 145 6 169 3C185 6 210 7 228 5V39C210 38 185 38 169 42C145 38 90 38 61 42C45 38 20 37 3 40Z" fill="url(#bam)" />
        <path d="M61 2C57 12 63 28 61 42M169 3C165 14 170 28 167 42" stroke="#1f4c12" strokeWidth="2" />
        <ellipse cx="3" cy="22" rx="2.500" ry="18" fill="#d9c27e" stroke="#7a6424" /><ellipse cx="228" cy="22" rx="2.500" ry="17" fill="#5c3c14" stroke="#b89444" />
        <path d="M25 16H45V27H25ZM25 20H45M25 23.500H45M29 16V27M33 16V27M37 16V27M41 16V27" stroke="#eef8e0" strokeWidth="1.100" />
        <path d="M186 17C188 24 183 28 179 27C184 33 195 27 186 17Z" fill="#fff" />
        <circle cx="201" cy="18" r="1.500" fill="#fff" /><path d="M208 24C211 24 211 28 208 31" stroke="#fff" strokeWidth="2" />
      </svg>
      <div className="relative flex gap-[9px] pt-[5px] pl-[68px] text-[24px] leading-[30px] text-white"><Fit w={50}>英简</Fit><Fit w={24}>系</Fit></div>
    </div>
  );
}

function Banner() {
  return (
    <div className="absolute top-[12px] left-[203px] flex items-start font-['Liberation_Serif'] text-[66px] leading-[70px] text-[#ff0000] [-webkit-text-stroke:1px_#ff0000]">
      <Fit w={274} className="mt-px font-['Noto_Sans_CJK_SC',sans-serif] text-[61px] tracking-[7px]">马哥教育</Fit>
      <Fit w={167} className="ml-[18px]">http://</Fit>
      <Fit w={175}>www.</Fit>
      <Fit w={233}>magedu.</Fit>
      <Fit w={133} className="ml-[4px]">com,</Fit>
      <Fit w={113} className="ml-[20px]">QQ:</Fit>
      <Fit w={376} className="ml-[4px] tracking-[3px]">1661815153</Fit>
    </div>
  );
}

export default function App() {
  return (
    <div className="relative h-[1080px] w-[1920px] overflow-hidden bg-black font-['Open_Sans','Noto_Sans_CJK_SC',sans-serif]">
      <div className="mx-auto flex h-full w-[1728px] flex-col bg-linear-to-r from-[#a9c5f4] via-[#c3d8f8] to-[#c6daf9]">
        <TitleBar />
        <MenuBar />
        <Toolbars />
        <div className="flex h-[818px] shrink-0 overflow-hidden">
          <LeftPane />
          <Center />
          <RightPane />
        </div>
        <DrawBar />
        <StatusBar />
        <Taskbar />
      </div>
      <Bamboo />
      <Banner />
    </div>
  );
}
